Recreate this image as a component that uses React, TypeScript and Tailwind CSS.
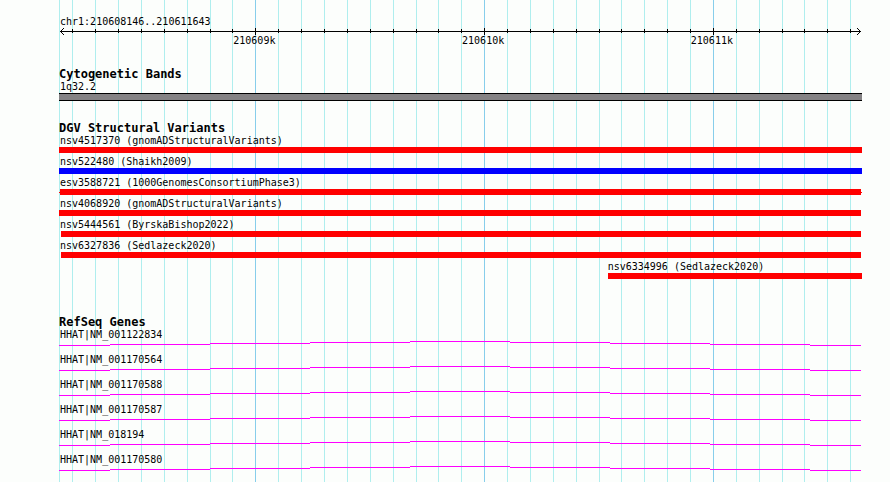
const START = 210608146;
const END = 210611643;

type Variant = {
  name: string;
  from?: number;
  color: string;
  inset?: string;
  whiskers?: boolean;
};

const variants: Variant[] = [
  { name: "nsv4517370 (gnomADStructuralVariants)", color: "bg-[#ff0000]" },
  { name: "nsv522480 (Shaikh2009)", color: "bg-[#0000ff]" },
  {
    name: "esv3588721 (1000GenomesConsortiumPhase3)",
    color: "bg-[#ff0000]",
    whiskers: true,
  },
  {
    name: "nsv4068920 (gnomADStructuralVariants)",
    color: "bg-[#ff0000]",
    inset: "pr-px",
  },
  {
    name: "nsv5444561 (ByrskaBishop2022)",
    color: "bg-[#ff0000]",
    inset: "pl-0.5 pr-px",
  },
  {
    name: "nsv6327836 (Sedlazeck2020)",
    color: "bg-[#ff0000]",
    inset: "pl-0.5 pr-px",
  },
  {
    name: "nsv6334996 (Sedlazeck2020)",
    from: 210610531,
    color: "bg-[#ff0000]",
    inset: "pl-px",
  },
];

const genes = [
  "HHAT|NM_001122834",
  "HHAT|NM_001170564",
  "HHAT|NM_001170588",
  "HHAT|NM_001170587",
  "HHAT|NM_018194",
  "HHAT|NM_001170580",
];

// one tick every 100 bp, a major one every 1000 bp
const ticks: number[] = [];
for (let pos = Math.ceil(START / 100) * 100; pos < END; pos += 100) {
  ticks.push(pos);
}
const majorTicks = ticks.filter((pos) => pos % 1000 === 0);

const percent = (pos: number) => `${((pos - START) / (END - START)) * 100}%`;

const Gridlines = () => (
  <div className="absolute inset-y-0 left-px right-0.5" aria-hidden="true">
    <div className="absolute inset-y-0 -left-px w-px bg-[#afeeee]" />
    {ticks.map((pos) => (
      <div
        key={pos}
        className={`absolute inset-y-0 w-px ${
          pos % 1000 === 0 ? "bg-[#87ceeb]" : "bg-[#afeeee]"
        }`}
        style={{ left: percent(pos) }}
      />
    ))}
  </div>
);

const Ruler = () => (
  <div className="ml-px mr-0.5">
    <div>
      chr1:{START}..{END}
    </div>
    <div className="relative -mr-px flex h-[7px] items-center">
      <svg width="4" height="7" viewBox="0 0 4 7" shapeRendering="crispEdges">
        <path d="M3 0h1v1H3zM2 1h1v1H2zM1 2h1v1H1zM0 3h4v1H0zM1 4h1v1H1zM2 5h1v1H2zM3 6h1v1H3z" />
      </svg>
      <div className="h-px flex-1 bg-black" />
      <svg width="4" height="7" viewBox="0 0 4 7" shapeRendering="crispEdges">
        <path d="M0 0h1v1H0zM1 1h1v1H1zM2 2h1v1H2zM0 3h4v1H0zM2 4h1v1H2zM1 5h1v1H1zM0 6h1v1H0z" />
      </svg>
      <div className="absolute inset-y-0 left-0 right-px">
        {ticks.map((pos) => (
          <div
            key={pos}
            className={`absolute w-px bg-black ${
              pos % 1000 === 0 ? "top-0 h-[7px]" : "top-px h-1"
            }`}
            style={{ left: percent(pos) }}
          />
        ))}
      </div>
    </div>
    <div className="relative h-3">
      {majorTicks.map((pos) => (
        <span
          key={pos}
          className="absolute top-0 -translate-x-1/2 pr-0.5"
          style={{ left: percent(pos) }}
        >
          {pos / 1000}k
        </span>
      ))}
    </div>
  </div>
);

const TrackTitle = ({ children }: { children: string }) => (
  <h2 className="text-[12px] font-bold leading-[14px]">{children}</h2>
);

const VariantRow = ({ name, from, color, inset, whiskers }: Variant) => (
  <li
    className="mb-[3px]"
    style={{ marginLeft: from ? percent(from) : undefined }}
  >
    <div className="pl-px">{name}</div>
    <div className={`flex items-center ${inset ?? ""}`}>
      {whiskers && <div className={`h-px w-px ${color}`} />}
      <div className={`h-1.5 flex-1 ${color}`} />
      {whiskers && <div className={`h-px w-px ${color}`} />}
    </div>
  </li>
);

// introns are drawn as one very shallow hat over the whole region
const GeneRow = ({ name }: { name: string }) => (
  <li className="mb-2">
    <div className="pl-px">{name}</div>
    <div className="pr-px">
      <svg
        className="block h-[5px] w-full"
        viewBox="0 0 802 5"
        preserveAspectRatio="none"
        fill="#ff00ff"
        shapeRendering="crispEdges"
      >
        <path d="M0 4h51v1H0zM51 3h100v1H51zM151 2h100v1H151zM251 1h100v1H251zM351 0h100v1H351zM451 1h100v1H451zM551 2h100v1H551zM651 3h100v1H651zM751 4h51v1H751z" />
      </svg>
    </div>
  </li>
);

const App = () => {
  return (
    <div className="flex min-h-screen bg-[#fcfefc] pl-[59px] pr-7 font-['DejaVu_Sans_Mono',monospace] text-[10px] leading-3 text-black">
      <main className="relative min-w-0 flex-1 whitespace-nowrap">
        <Gridlines />
        <div className="relative flex flex-col pt-4">
          <Ruler />
          <section className="mt-5">
            <TrackTitle>Cytogenetic Bands</TrackTitle>
            <div className="pl-px">1q32.2</div>
            <div className="h-2 border-y border-black bg-[#848284]" />
          </section>
          <section className="mt-5">
            <TrackTitle>DGV Structural Variants</TrackTitle>
            <ul>
              {variants.map((variant) => (
                <VariantRow key={variant.name} {...variant} />
              ))}
            </ul>
          </section>
          <section className="mt-[33px]">
            <TrackTitle>RefSeq Genes</TrackTitle>
            <ul>
              {genes.map((name) => (
                <GeneRow key={name} name={name} />
              ))}
            </ul>
          </section>
        </div>
      </main>
    </div>
  );
};

export default App;
